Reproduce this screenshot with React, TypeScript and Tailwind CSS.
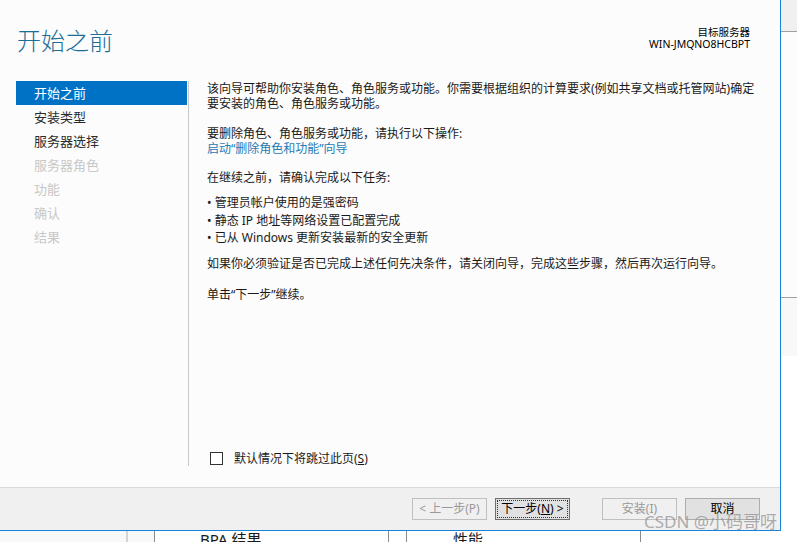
import React from 'react'

const FONT = '"Noto Sans", "Noto Sans CJK SC", sans-serif'

const navItems = [
  { label: '开始之前', state: 'active' },
  { label: '安装类型', state: 'normal' },
  { label: '服务器选择', state: 'normal' },
  { label: '服务器角色', state: 'disabled' },
  { label: '功能', state: 'disabled' },
  { label: '确认', state: 'disabled' },
  { label: '结果', state: 'disabled' },
]

function NavList() {
  return (
    <div className="ml-[16px] w-[171px] flex flex-col">
      {navItems.map((item) => (
        <div
          key={item.label}
          className={
            'h-[24px] leading-[24px] pl-[18px] text-[13px] whitespace-nowrap ' +
            (item.state === 'active'
              ? 'bg-[#0072c6] text-white'
              : item.state === 'normal'
                ? 'text-[#2b2b2b]'
                : 'text-[#c8c8c8]')
          }
        >
          {item.label}
        </div>
      ))}
    </div>
  )
}

function WizardButton({ children, kind }: { children: React.ReactNode; kind: 'disabled' | 'focus' | 'normal' }) {
  if (kind === 'focus') {
    return (
      <div className="w-[75px] h-[22px] border border-[#6f6f6f] bg-[#e1e1e1] p-[1px]">
        <div className="w-full h-full border border-dotted border-[#333] flex items-center justify-center text-[12px] text-black">
          {children}
        </div>
      </div>
    )
  }
  return (
    <div
      className={
        'w-[75px] h-[22px] border flex items-center justify-center text-[12px] ' +
        (kind === 'disabled'
          ? 'border-[#bfbfbf] bg-[#f0f0f0] text-[#9a9a9a]'
          : 'border-[#adadad] bg-[#e1e1e1] text-black')
      }
    >
      {children}
    </div>
  )
}

function Content() {
  return (
    <div className="flex-1 flex flex-col pl-[18px] pb-[21px] text-[12px] leading-[15px] text-[#1a1a1a] whitespace-nowrap">
      <p>
        该向导可帮助你安装角色、角色服务或功能。你需要根据组织的计算要求(例如共享文档或托管网站)确定
        <br />
        要安装的角色、角色服务或功能。
      </p>
      <p className="mt-[15px]">要删除角色、角色服务或功能，请执行以下操作:</p>
      <p className="text-[#1f7ab5]">启动“删除角色和功能”向导</p>
      <p className="mt-[14px]">在继续之前，请确认完成以下任务:</p>
      <ul className="mt-[10px] flex flex-col gap-[2.5px]">
        <li>• 管理员帐户使用的是强密码</li>
        <li>• 静态 IP 地址等网络设置已配置完成</li>
        <li>• 已从 Windows 更新安装最新的安全更新</li>
      </ul>
      <p className="mt-[11px]">如果你必须验证是否已完成上述任何先决条件，请关闭向导，完成这些步骤，然后再次运行向导。</p>
      <p className="mt-[16px]">单击“下一步”继续。</p>

      <div className="mt-auto flex items-center">
        <div className="ml-[3px] w-[13px] h-[13px] border border-[#333] bg-white" />
        <span className="ml-[11px]">
          默认情况下将跳过此页(<span className="underline">S</span>)
        </span>
      </div>
    </div>
  )
}

export default function App() {
  return (
    <div className="relative w-[797px] h-[542px] overflow-hidden bg-white" style={{ fontFamily: FONT }}>
      <div className="flex h-[531px]">
        {/* wizard window */}
        <div className="w-[781px] h-[531px] flex flex-col bg-[#fcfcfc] border-r border-b border-[#1883d7]">
          {/* header */}
          <div className="h-[81px] flex justify-between pl-[17px] pr-[30px]">
            <div className="pt-[28px] text-[24px] leading-[26px] font-light text-[#1b6d99]">开始之前</div>
            <div className="pt-[26px] flex flex-col items-end text-[10.5px] leading-[12px] text-black">
              <span>目标服务器</span>
              <span>WIN-JMQNO8HCBPT</span>
            </div>
          </div>

          {/* body */}
          <div className="flex-1 flex">
            <NavList />
            <div className="ml-[1px] w-px h-[385px] bg-[#c8c8c8]" />
            <Content />
          </div>

          {/* footer */}
          <div className="h-[43px] border-t border-[#dadada] bg-[#f0f0f0] flex justify-end pt-[10px] pr-[20px]">
            <WizardButton kind="disabled">&lt; 上一步(P)</WizardButton>
            <div className="ml-[8px]">
              <WizardButton kind="focus">
                下一步(<span className="underline">N</span>) &gt;
              </WizardButton>
            </div>
            <div className="ml-[32px]">
              <WizardButton kind="disabled">安装(I)</WizardButton>
            </div>
            <div className="ml-[8px]">
              <WizardButton kind="normal">取消</WizardButton>
            </div>
          </div>
        </div>

        {/* area to the right of the window */}
        <div className="flex-1 flex flex-col">
          <div className="h-[32px] bg-[#f0f0f0] border-b border-[#a0a0a0]" />
          <div className="h-[266px] bg-[#fcfcfc] border-b border-[#a0a0a0]" />
          <div className="h-[58px] bg-[#f8f8f8]" />
          <div className="flex-1 bg-white" />
        </div>
      </div>

      {/* table header strip beneath the window */}
      <div className="h-[11px] flex overflow-hidden text-[15px] leading-[18px] text-[#1a1a1a]">
        <div className="w-[126px] bg-[#f8f8f8]" />
        <div className="w-[2px] bg-[#d4d4d4]" />
        <div className="w-[26px] bg-[#f8f8f8]" />
        <div className="w-px bg-[#8a8a8a]" />
        <div className="w-[233px] bg-white pl-[45px] -mt-[1px]">BPA 结果</div>
        <div className="w-px bg-[#8a8a8a]" />
        <div className="w-[17px] bg-white" />
        <div className="w-px bg-[#8a8a8a]" />
        <div className="w-[233px] bg-white pl-[46px] -mt-[1px]">性能</div>
        <div className="w-px bg-[#8a8a8a]" />
        <div className="flex-1 bg-white" />
      </div>

      {/* watermark */}
      <div className="absolute left-[644px] top-[512px] text-[17px] leading-[20px] text-[#8c8c8c]/70 whitespace-nowrap">
        CSDN @小码哥呀
      </div>
    </div>
  )
}
